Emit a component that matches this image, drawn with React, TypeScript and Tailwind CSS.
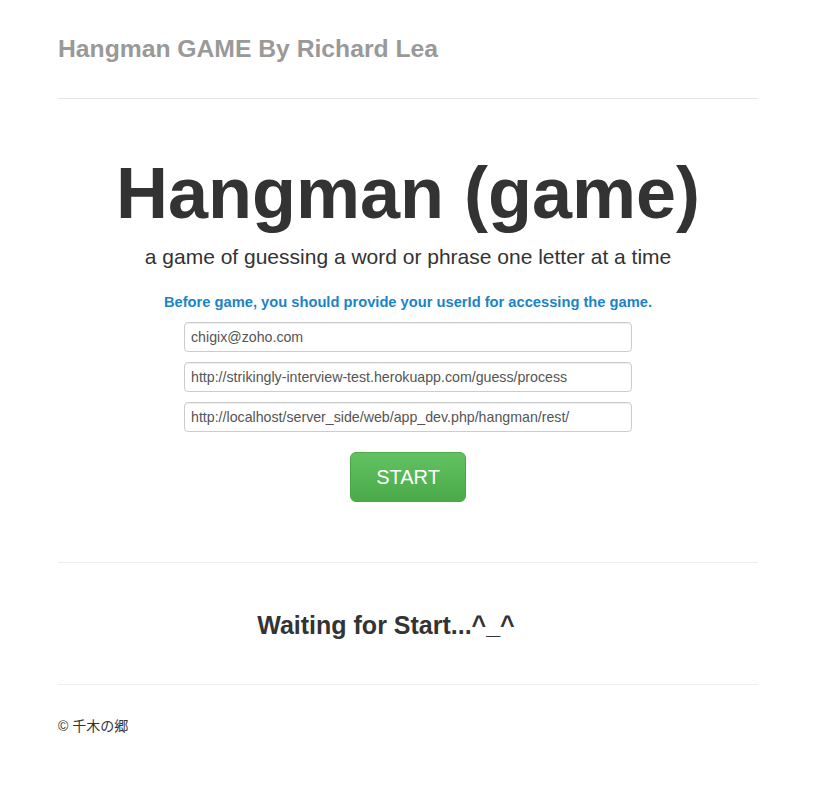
export default function App() {
  const fields = [
    "chigix@zoho.com",
    "http://strikingly-interview-test.herokuapp.com/guess/process",
    "http://localhost/server_side/web/app_dev.php/hangman/rest/",
  ];

  return (
    <div
      className="min-h-[793px] bg-white text-[#333]"
      style={{ fontFamily: '"Liberation Sans", Arial, "Noto Sans CJK JP", sans-serif' }}
    >
      <div className="ml-[58px] w-[700px]">
        <header className="pt-[29px] pb-[29px] border-b border-[#e5e5e5]">
          <h3 className="text-[24.7px] leading-[40px] font-bold text-[#999]">Hangman GAME By Richard Lea</h3>
        </header>

        <section className="pt-[58px] pb-[60px] border-b border-[#eee] flex flex-col items-center text-center">
          <h1 className="text-[72px] leading-[72px] font-bold text-[#333]">Hangman (game)</h1>
          <p className="mt-[13px] text-[21px] leading-[29px] text-[#333]">
            a game of guessing a word or phrase one letter at a time
          </p>
          <p className="mt-[22px] text-[14.7px] leading-[18px] font-bold text-[#1a84c6]">
            Before game, you should provide your userId for accessing the game.
          </p>
          <div className="mt-[11px] flex flex-col gap-[10px] w-[448px]">
            {fields.map((v) => (
              <input
                key={v}
                defaultValue={v}
                className="h-[30px] w-full rounded-[4px] border border-[#ccc] px-[6px] text-[14.2px] text-[#555] shadow-[inset_0_1px_1px_rgba(0,0,0,0.075)] outline-none"
              />
            ))}
          </div>
          <button className="mt-[20px] w-[116px] h-[50px] rounded-[6px] border border-[#4aa84a] bg-gradient-to-b from-[#62c262] to-[#4aaa4a] text-white text-[20px]">
            START
          </button>
        </section>

        <section className="h-[122px] border-b border-[#eee] flex items-center justify-center pr-[44px]">
          <h3 className="pt-[4px] text-[25px] font-bold text-[#333]">Waiting for Start...^_^</h3>
        </section>

        <footer className="pt-[31px] text-[14px] text-[#333]">© 千木の郷</footer>
      </div>
    </div>
  );
}
